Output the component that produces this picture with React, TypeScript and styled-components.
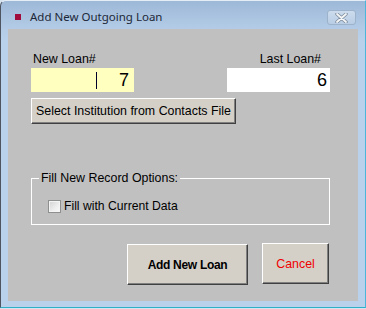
import React from "react";
import styled, { createGlobalStyle } from "styled-components";

const Global = createGlobalStyle`
  html, body { margin: 0; padding: 0; background: #d6e4f2; }
  * { box-sizing: border-box; }
`;

const Window = styled.div`
  width: 366px;
  height: 308px;
  display: flex;
  flex-direction: column;
  background: linear-gradient(#9db8d8 0px, #b4cce6 29px, #b9d1ea 40px, #b9d1ea 100%);
  border-left: 1px solid #4f5560;
  border-right: 1px solid #4ab6da;
  border-bottom: 1px solid #2fb0c6;
  border-top: 1px solid #e4ecf5;
  border-top-left-radius: 6px;
  padding: 0 7px 6px 7px;
`;

const TitleBar = styled.div`
  height: 28px;
  display: flex;
  align-items: flex-start;
  padding: 8px 0 0 7px;
`;

const AppIcon = styled.div`
  width: 6px;
  height: 6px;
  margin-top: 5px;
  background: #a00c3c;
`;

const TitleText = styled.div`
  margin-left: 9px;
  font-family: "Noto Sans", "DejaVu Sans", sans-serif;
  font-size: 11.5px;
  line-height: 15px;
  color: #1c2838;
`;

const CloseButton = styled.div`
  margin-left: auto;
  margin-right: 2px;
  margin-top: 1px;
  width: 29px;
  height: 15px;
  border: 1px solid #9db3cc;
  border-radius: 3px;
  background: linear-gradient(#cddcee, #b8cde4);
  display: flex;
  align-items: center;
  justify-content: center;
`;

const Client = styled.div`
  flex: 1;
  background: #c0c0c0;
  padding: 23px 0 0 23px;
  font-family: "Liberation Sans", Arial, sans-serif;
  font-size: 12.4px;
  color: #000;
`;

const Form = styled.div`
  width: 299px;
  display: flex;
  flex-direction: column;
`;

const FieldsRow = styled.div`
  display: flex;
  justify-content: space-between;
`;

const Field = styled.div<{ $end?: boolean }>`
  display: flex;
  flex-direction: column;
  align-items: ${(p) => (p.$end ? "flex-end" : "flex-start")};
`;

const FieldLabel = styled.div<{ $padL?: number; $padR?: number }>`
  line-height: 15px;
  margin-bottom: 1px;
  padding-left: ${(p) => p.$padL ?? 0}px;
  padding-right: ${(p) => p.$padR ?? 0}px;
`;

const ValueBox = styled.div<{ $bg: string; $padR: number }>`
  width: 103px;
  height: 24px;
  background: ${(p) => p.$bg};
  display: flex;
  align-items: center;
  justify-content: flex-end;
  padding-right: ${(p) => p.$padR}px;
  font-size: 18px;
  line-height: 20px;
`;

const Caret = styled.span`
  width: 1px;
  height: 17px;
  background: #00002a;
  margin-right: 22px;
`;

const Button3D = styled.button<{ $w: number; $h: number; $bold?: boolean; $color?: string }>`
  width: ${(p) => p.$w}px;
  height: ${(p) => p.$h}px;
  padding: 0;
  margin: 0;
  background: #d4d0c8;
  border-top: 1px solid #ffffff;
  border-left: 1px solid #ffffff;
  border-right: 1px solid #404040;
  border-bottom: 1px solid #404040;
  box-shadow: inset -1px -1px 0 #808080;
  font-family: "Liberation Sans", Arial, sans-serif;
  font-size: ${(p) => (p.$bold ? "12px" : "12.4px")};
  font-weight: ${(p) => (p.$bold ? 700 : 400)};
  letter-spacing: ${(p) => (p.$bold ? "-0.3px" : "0")};
  color: ${(p) => p.$color ?? "#000"};
  display: flex;
  align-items: center;
  justify-content: center;
`;

const SelectButton = styled(Button3D)`
  margin-top: 6px;
`;

const GroupBox = styled.div`
  position: relative;
  margin-top: 54px;
  height: 47px;
  border: 1px solid #ffffff;
  padding: 20px 0 0 16px;
`;

const GroupLegend = styled.div`
  position: absolute;
  top: -8px;
  left: 7px;
  padding: 0 2px;
  background: #c0c0c0;
  line-height: 15px;
`;

const CheckRow = styled.label`
  display: flex;
  align-items: center;
  gap: 3px;
  line-height: 15px;
  font-size: 12.2px;
`;

const CheckBox = styled.span`
  width: 13px;
  height: 13px;
  border: 1px solid #8e8f8f;
  background: linear-gradient(135deg, #d2d2d2 0%, #eeeeee 60%, #fafafa 100%);
  box-shadow: inset 0 0 0 1px #f4f4f4;
`;

const ButtonRow = styled.div`
  margin-top: 18px;
  display: flex;
  justify-content: flex-end;
  align-items: flex-start;
  gap: 14px;
  padding-right: 1px;
`;

const AddButton = styled(Button3D)`
  margin-top: 1px;
`;

export default function App() {
  return (
    <>
      <Global />
      <Window>
        <TitleBar>
          <AppIcon />
          <TitleText>Add New Outgoing Loan</TitleText>
          <CloseButton>
            <svg width="13" height="10" viewBox="0 0 13 10">
              <path
                d="M2 1 L11 9 M11 1 L2 9"
                stroke="#7d8c9c"
                strokeWidth="3.4"
                strokeLinecap="round"
                fill="none"
              />
              <path
                d="M2 1 L11 9 M11 1 L2 9"
                stroke="#f4f6f8"
                strokeWidth="1.8"
                strokeLinecap="round"
                fill="none"
              />
            </svg>
          </CloseButton>
        </TitleBar>
        <Client>
          <Form>
            <FieldsRow>
              <Field>
                <FieldLabel $padL={2}>New Loan#</FieldLabel>
                <ValueBox $bg="#ffffc0" $padR={5}>
                  <Caret />
                  7
                </ValueBox>
              </Field>
              <Field $end>
                <FieldLabel $padR={9}>Last Loan#</FieldLabel>
                <ValueBox $bg="#ffffff" $padR={3}>
                  6
                </ValueBox>
              </Field>
            </FieldsRow>
            <SelectButton $w={205} $h={26}>
              Select Institution from Contacts File
            </SelectButton>
            <GroupBox>
              <GroupLegend>Fill New Record Options:</GroupLegend>
              <CheckRow>
                <CheckBox />
                Fill with Current Data
              </CheckRow>
            </GroupBox>
            <ButtonRow>
              <AddButton $w={121} $h={41} $bold>
                Add New Loan
              </AddButton>
              <Button3D $w={67} $h={41} $color="#f00000">
                Cancel
              </Button3D>
            </ButtonRow>
          </Form>
        </Client>
      </Window>
    </>
  );
}
